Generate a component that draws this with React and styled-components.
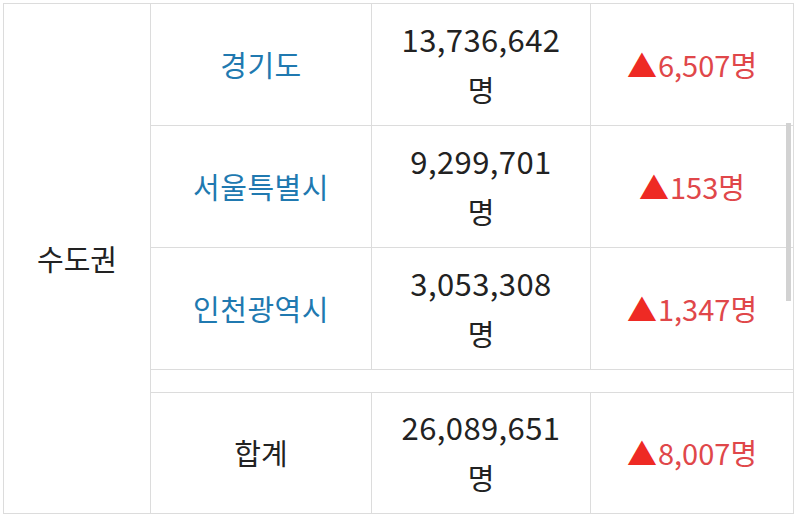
import React from "react";
import styled, { createGlobalStyle } from "styled-components";

const GlobalStyle = createGlobalStyle`
  html, body {
    margin: 0;
    padding: 0;
    background: #ffffff;
  }
  body {
    font-family: "Noto Sans CJK KR", "Noto Sans", sans-serif;
    color: #222222;
  }
`;

const Page = styled.div`
  position: relative;
  width: 800px;
  height: 515px;
  padding: 3px 7px 0 3px;
  box-sizing: border-box;
  overflow: hidden;
`;

const Table = styled.table`
  width: 790px;
  border-collapse: collapse;
  table-layout: fixed;
  border: 1px solid #dcdcdc;
`;

const Cell = styled.td`
  border: 1px solid #dcdcdc;
  text-align: center;
  vertical-align: middle;
  padding: 0 6px 2px;
  height: ${({ $h }) => $h || 122}px;
  box-sizing: border-box;
  font-size: 29px;
  line-height: 50px;
  color: ${({ $tone }) =>
    $tone === "link" ? "#2079b0" : $tone === "up" ? "#e0474a" : "#222222"};
  letter-spacing: ${({ $tone }) => ($tone === "link" ? "0.5px" : "0")};
`;

const Number = styled.span`
  display: block;
  font-size: 31px;
  letter-spacing: 0.4px;
`;

const Unit = styled.span`
  display: block;
`;

const Arrow = styled.span`
  color: #ee2a24;
  font-size: 30px;
  margin-right: 1px;
`;

const Spacer = styled.td`
  border: 1px solid #dcdcdc;
  height: 22px;
  padding: 0;
`;

const ScrollThumb = styled.div`
  position: absolute;
  left: 786px;
  top: 123px;
  width: 5px;
  height: 178px;
  background: #d2d2d2;
`;

const rows = [
  { name: "경기도", count: "13,736,642", diff: "6,507" },
  { name: "서울특별시", count: "9,299,701", diff: "153" },
  { name: "인천광역시", count: "3,053,308", diff: "1,347" },
];

export default function App() {
  return (
    <>
      <GlobalStyle />
      <Page>
        <Table>
          <colgroup>
            <col style={{ width: 147 }} />
            <col style={{ width: 221 }} />
            <col style={{ width: 219 }} />
            <col style={{ width: 203 }} />
          </colgroup>
          <tbody>
            {rows.map((r, i) => (
              <tr key={r.name}>
                {i === 0 && <Cell rowSpan={5}>수도권</Cell>}
                <Cell $tone="link">{r.name}</Cell>
                <Cell>
                  <Number>{r.count}</Number>
                  <Unit>명</Unit>
                </Cell>
                <Cell $tone="up">
                  <Arrow>▲</Arrow>
                  {r.diff}명
                </Cell>
              </tr>
            ))}
            <tr>
              <Spacer colSpan={3} />
            </tr>
            <tr>
              <Cell $h={121}>합계</Cell>
              <Cell $h={121}>
                <Number>26,089,651</Number>
                <Unit>명</Unit>
              </Cell>
              <Cell $h={121} $tone="up">
                <Arrow>▲</Arrow>
                8,007명
              </Cell>
            </tr>
          </tbody>
        </Table>
        <ScrollThumb />
      </Page>
    </>
  );
}
